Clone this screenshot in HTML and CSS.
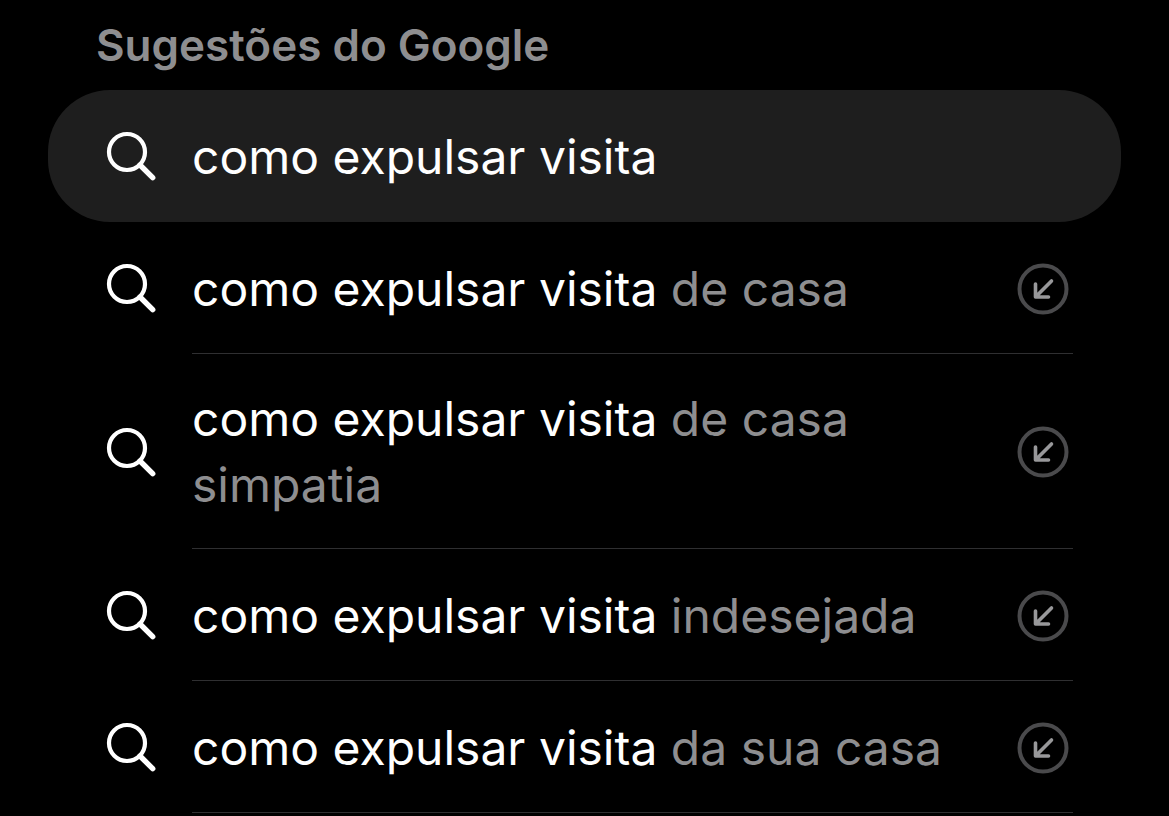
FILE: index.html
```html
<!DOCTYPE html>
<html lang="pt-BR">
<head>
    <meta charset="UTF-8">
    <meta name="viewport" content="width=device-width, initial-scale=1.0">
    <title>Sugestões do Google</title>
    <link rel="stylesheet" href="styles.css">
</head>
<body>
    <svg class="symbols" aria-hidden="true">
        <symbol id="search" viewBox="0 0 50 50">
            <circle cx="21" cy="21" r="18" fill="none" stroke="currentColor" stroke-width="4.2"/>
            <path d="M34 34L46.7 46.7" stroke="currentColor" stroke-width="5.4" stroke-linecap="round"/>
        </symbol>
        <symbol id="fill" viewBox="0 0 52 52">
            <circle class="ring" cx="26" cy="26" r="23.5" fill="none" stroke-width="4"/>
            <path d="M34.5 18L19 33.5M18.5 21V34H31.5" fill="none" stroke="currentColor" stroke-width="3.6" stroke-linecap="round" stroke-linejoin="round"/>
        </symbol>
    </svg>

    <main class="suggestions">
        <h2>Sugestões do Google</h2>
        <ul class="list">
            <li class="row selected">
                <svg class="search-icon"><use href="#search"/></svg>
                <div class="content">
                    <a href="#">como expulsar visita</a>
                </div>
            </li>
            <li class="row">
                <svg class="search-icon"><use href="#search"/></svg>
                <div class="content">
                    <a href="#">como expulsar visita <span>de casa</span></a>
                    <button type="button" aria-label="Preencher busca"><svg><use href="#fill"/></svg></button>
                </div>
            </li>
            <li class="row">
                <svg class="search-icon"><use href="#search"/></svg>
                <div class="content">
                    <a href="#">como expulsar visita <span>de casa simpatia</span></a>
                    <button type="button" aria-label="Preencher busca"><svg><use href="#fill"/></svg></button>
                </div>
            </li>
            <li class="row">
                <svg class="search-icon"><use href="#search"/></svg>
                <div class="content">
                    <a href="#">como expulsar visita <span>indesejada</span></a>
                    <button type="button" aria-label="Preencher busca"><svg><use href="#fill"/></svg></button>
                </div>
            </li>
            <li class="row">
                <svg class="search-icon"><use href="#search"/></svg>
                <div class="content">
                    <a href="#">como expulsar visita <span>da sua casa</span></a>
                    <button type="button" aria-label="Preencher busca"><svg><use href="#fill"/></svg></button>
                </div>
            </li>
        </ul>
    </main>
</body>
</html>
```
FILE: styles.css
```css
* {
    margin: 0;
    padding: 0;
    box-sizing: border-box;
}
body {
    background: #000;
    color: #fff;
    font-family: Inter, "Liberation Sans", sans-serif;
}
.symbols {
    display: none;
}
.suggestions {
    padding: 0 48px;
}
h2 {
    padding: 15px 48px;
    font-size: 44px;
    line-height: 60px;
    font-weight: 600;
    color: #8e8e90;
}
.list {
    list-style: none;
}
.row {
    display: flex;
    align-items: center;
    gap: 36px;
    padding: 0 48px 0 58px;
}
.selected {
    background: #1e1e1e;
    border-radius: 62px;
}
.search-icon {
    width: 50px;
    height: 50px;
    flex-shrink: 0;
}
.content {
    flex: 1;
    display: flex;
    align-items: center;
    justify-content: space-between;
    gap: 48px;
    min-height: 132px;
    padding: 32px 4px 30px 0;
    border-bottom: 1px solid #2f2f31;
}
.selected .content {
    border-bottom: none;
}
a {
    color: #fff;
    font-size: 48px;
    line-height: 66px;
    text-decoration: none;
}
a span {
    color: #8e8e90;
}
button {
    width: 52px;
    height: 52px;
    flex-shrink: 0;
    border: none;
    background: none;
    color: #98989a;
    cursor: pointer;
}
button svg {
    display: block;
    width: 52px;
    height: 52px;
}
.ring {
    stroke: #4a4a4c;
}
```
